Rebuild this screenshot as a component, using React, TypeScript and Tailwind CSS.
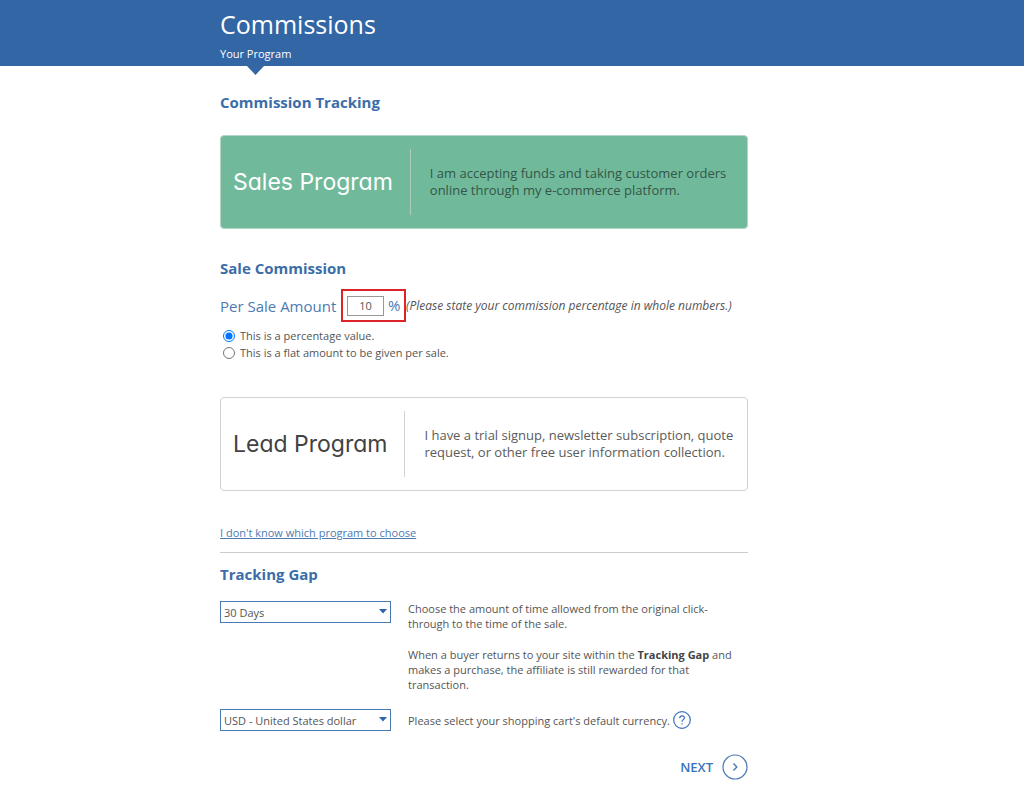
import { useState } from 'react';
import type { ReactNode } from 'react';

interface ProgramCardProps {
  title: string;
  active?: boolean;
  children: ReactNode;
}

function ProgramCard({ title, active = false, children }: ProgramCardProps) {
  return (
    <button
      type="button"
      aria-pressed={active}
      className={
        active
          ? 'flex w-full items-center rounded border border-[#b4d5c5] bg-[#70ba9b] px-3 py-[13px] text-left text-[#345548]'
          : 'flex w-full items-center rounded border border-[#d2d2d2] bg-white px-3 py-[13px] text-left text-[#5b5b5b]'
      }
    >
      <span
        className={
          active
            ? "shrink-0 border-r border-[#adcabb] py-[17px] pr-[17px] font-['Inter','Open_Sans',sans-serif] text-[23px] leading-8 text-white [font-feature-settings:'cv11']"
            : "shrink-0 border-r border-[#d2d2d2] py-[17px] pr-[17px] font-['Inter','Open_Sans',sans-serif] text-[23px] leading-8 text-[#424242] [font-feature-settings:'cv11']"
        }
      >
        {title}
      </span>
      <span className="pl-[19px] text-[13px] leading-[17px]">{children}</span>
    </button>
  );
}

interface SelectBoxProps {
  id: string;
  label: string;
  options: string[];
}

function SelectBox({ id, label, options }: SelectBoxProps) {
  return (
    <div className="relative w-[171px] shrink-0">
      <select
        id={id}
        aria-label={label}
        className="block h-[22px] w-full appearance-none border border-[#4a7ab3] bg-white pr-5 pl-[3px] text-[11px] text-[#555]"
      >
        {options.map((option) => (
          <option key={option}>{option}</option>
        ))}
      </select>
      <svg
        className="pointer-events-none absolute top-2 right-1 h-[5px] w-2"
        viewBox="0 0 8 5"
        fill="#2c64ae"
        aria-hidden="true"
      >
        <path d="M0 0h8L4 4.5z" />
      </svg>
    </div>
  );
}

export default function App() {
  const [amount, setAmount] = useState('10');
  const [kind, setKind] = useState('percentage');

  return (
    <div className="min-h-screen bg-white font-['Open_Sans',sans-serif] text-[11px] leading-[15px] text-[#555]">
      <header className="bg-[#3266a5] text-white">
        <div className="mx-auto h-[66px] max-w-[584px] pt-1">
          <h1 className="text-[25px] leading-10">Commissions</h1>
          {/* active step with its pointer below the bar */}
          <div className="relative inline-block">
            <span className="block leading-5">Your Program</span>
            <svg
              className="absolute top-[22px] left-[27px] h-[9px] w-[17px]"
              viewBox="0 0 17 9"
              fill="#3266a5"
              aria-hidden="true"
            >
              <path d="M0 0h17L8.500 9z" />
            </svg>
          </div>
        </div>
      </header>

      <main className="mx-auto max-w-[584px] pt-[26px] pr-14 pb-4">
        <h2 className="mb-[23px] text-[15px] leading-5 font-bold text-[#3b6da8]">Commission Tracking</h2>

        <ProgramCard title="Sales Program" active>
          I am accepting funds and taking customer orders
          <br />
          online through my e-commerce platform.
        </ProgramCard>

        <h2 className="mt-[29px] mb-[11px] text-[15px] leading-5 font-bold text-[#3b6da8]">Sale Commission</h2>

        <div className="flex items-center whitespace-nowrap text-[#4d7ab0]">
          <label htmlFor="amount" className="w-[121px] text-[15px] leading-5">
            Per Sale Amount
          </label>
          <div className="flex h-[33px] w-[65px] shrink-0 items-center gap-1 border-2 border-[#dd2328] pl-1 text-[15px]">
            <input
              id="amount"
              type="text"
              value={amount}
              onChange={(e) => setAmount(e.target.value)}
              className="h-5 w-[37px] border border-[#999] bg-white text-center text-[11px] text-[#555]"
            />
            <span>%</span>
          </div>
          <em className="text-[12px] text-[#555]">(Please state your commission percentage in whole numbers.)</em>
        </div>

        <div className="mt-[5px] mb-9">
          <label className="flex h-[17px] items-center gap-[5px] pl-[3px]">
            <input
              type="radio"
              name="kind"
              className="h-3 w-3"
              checked={kind === 'percentage'}
              onChange={() => setKind('percentage')}
            />
            This is a percentage value.
          </label>
          <label className="flex h-[17px] items-center gap-[5px] pl-[3px]">
            <input
              type="radio"
              name="kind"
              className="h-3 w-3"
              checked={kind === 'flat'}
              onChange={() => setKind('flat')}
            />
            This is a flat amount to be given per sale.
          </label>
        </div>

        <ProgramCard title="Lead Program">
          I have a trial signup, newsletter subscription, quote
          <br />
          request, or other free user information collection.
        </ProgramCard>

        <div className="mt-[34px] border-b border-[#ccc] pb-3">
          <a href="#programs" className="text-[#4d7ab0] underline">
            I don't know which program to choose
          </a>
        </div>

        <h2 className="mt-[11px] mb-[17px] text-[15px] leading-5 font-bold text-[#3b6da8]">Tracking Gap</h2>

        <div className="flex gap-[17px]">
          <SelectBox id="gap" label="Tracking gap" options={['30 Days', '60 Days', '90 Days']} />
          <div className="max-w-[330px]">
            <p>Choose the amount of time allowed from the original click-through to the time of the sale.</p>
            <p className="mt-4">
              When a buyer returns to your site within the <strong className="text-[#444]">Tracking Gap</strong> and
              makes a purchase, the affiliate is still rewarded for that transaction.
            </p>
          </div>
        </div>

        <div className="mt-[17px] flex items-center gap-[17px]">
          <SelectBox
            id="currency"
            label="Currency"
            options={['USD - United States dollar', 'EUR - Euro', 'GBP - British pound']}
          />
          <div className="flex items-center gap-[3px]">
            <p>Please select your shopping cart's default currency.</p>
            <button type="button" aria-label="Currency help" className="shrink-0">
              <svg className="h-[18px] w-[18px]" viewBox="0 0 18 18" fill="none" stroke="#3a72b8" aria-hidden="true">
                <circle cx="9" cy="9" r="8.300" strokeWidth="1.200" />
                <path
                  d="M6.700 7.200c0-1.500 1-2.400 2.400-2.400s2.300.800 2.300 2c0 1.800-2.300 1.800-2.300 3.600v.4M9.100 12.300v1.300"
                  strokeWidth="1.200"
                />
              </svg>
            </button>
          </div>
        </div>

        <div className="mt-[23px] flex justify-end">
          <button type="button" className="flex items-center gap-[9px] text-[13px] leading-5 font-semibold text-[#3a72b8]">
            NEXT
            <svg className="h-[26px] w-[26px]" viewBox="0 0 26 26" fill="none" stroke="#4a7ab3" aria-hidden="true">
              <circle cx="13" cy="13" r="12" strokeWidth="1.200" />
              <path d="M11.500 9.500l3.300 3.500-3.300 3.500" strokeWidth="1.400" />
            </svg>
          </button>
        </div>
      </main>
    </div>
  );
}
